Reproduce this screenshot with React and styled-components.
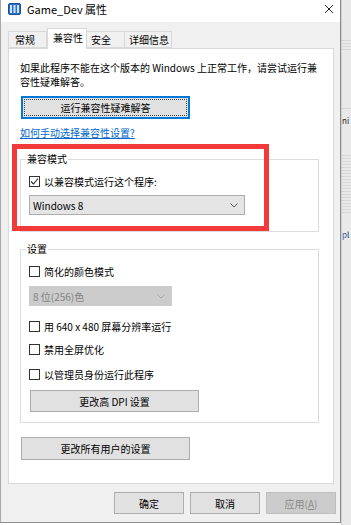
import React, { useState } from "react";
import styled, { createGlobalStyle } from "styled-components";

const GlobalStyle = createGlobalStyle`
  html, body {
    margin: 0;
    padding: 0;
    background: #ffffff;
  }
  body {
    font-family: "Noto Sans CJK SC", "Noto Sans", "Liberation Sans", sans-serif;
    font-size: 10px;
    color: #000;
  }
`;

const Screen = styled.div`
  display: flex;
  width: 351px;
  height: 525px;
  overflow: hidden;
`;

const Window = styled.div`
  width: 341px;
  height: 523px;
  box-sizing: border-box;
  border-left: 1px solid #a8a8a8;
  border-right: 1px solid #8c8c8c;
  border-bottom: 1px solid #8c8c8c;
  background: #f0f0f0;
  display: flex;
  flex-direction: column;
  flex-shrink: 0;
`;

const TitleBar = styled.div`
  height: 22px;
  box-sizing: border-box;
  padding: 0 0 4px 7px;
  background: #ffffff;
  display: flex;
  align-items: center;
  gap: 6px;
  font-size: 11px;
`;

const TitleText = styled.span`
  flex: 1;
  line-height: 14px;
`;

const CloseBtn = styled.div`
  width: 8px;
  height: 8px;
  margin-right: 7px;
  display: flex;
`;

const Body = styled.div`
  flex: 1;
  padding: 6px 7px 0 7px;
  display: flex;
  flex-direction: column;
`;

const TabRow = styled.div`
  display: flex;
  align-items: flex-end;
  height: 20px;
  position: relative;
  z-index: 1;
`;

const Tab = styled.div`
  box-sizing: border-box;
  width: ${(p) => p.$w}px;
  height: ${(p) => (p.$active ? 21 : 17)}px;
  padding-left: ${(p) => p.$pad}px;
  border: 1px solid #d9d9d9;
  border-bottom: ${(p) => (p.$active ? "none" : "1px solid #d9d9d9")};
  border-left-width: ${(p) => (p.$first || p.$active ? 1 : 0)}px;
  background: ${(p) => (p.$active ? "#ffffff" : "#f0f0f0")};
  line-height: ${(p) => (p.$active ? 18 : 15)}px;
  margin-bottom: ${(p) => (p.$active ? -1 : 0)}px;
  white-space: nowrap;
  cursor: default;
`;

const Panel = styled.div`
  position: relative;
  box-sizing: border-box;
  width: 326px;
  height: 436px;
  background: #ffffff;
  border: 1px solid #d9d9d9;
  padding: 12px 0 0 11px;
  display: flex;
  flex-direction: column;
  align-items: flex-start;
`;

const Intro = styled.p`
  margin: 0;
  width: 306px;
  line-height: 14px;
`;

const Button = styled.button`
  box-sizing: border-box;
  width: ${(p) => p.$w || 169}px;
  height: ${(p) => p.$h || 22}px;
  margin: ${(p) => p.$m || 0};
  padding: 0;
  font: inherit;
  font-size: 10px;
  color: ${(p) => (p.disabled ? "#8a8a8a" : "#000")};
  background: ${(p) => (p.disabled ? "#cccccc" : "#e1e1e1")};
  border: 1px solid ${(p) => (p.disabled ? "#bfbfbf" : "#adadad")};
  position: relative;
  ${(p) =>
    p.$focus &&
    `
    border: 2px solid #0078d7;
    &::after {
      content: "";
      position: absolute;
      inset: 1px;
      border: 1px dotted #444;
    }
  `}
`;

const Link = styled.a`
  margin-top: 7px;
  color: #0066cc;
  text-decoration: underline;
  line-height: 14px;
  cursor: pointer;
`;

const Group = styled.fieldset`
  box-sizing: border-box;
  width: 299px;
  margin: ${(p) => p.$mt}px 0 0 0;
  padding: 0 8px ${(p) => p.$pb}px 8px;
  border: 1px solid #dcdcdc;
  display: flex;
  flex-direction: column;
  align-items: flex-start;
  min-width: 0;
`;

const Legend = styled.legend`
  padding: 0 1px;
  margin-left: -3px;
  line-height: 14px;
`;

const CheckRow = styled.label`
  display: flex;
  align-items: center;
  gap: 4px;
  height: 14px;
  margin-top: ${(p) => p.$mt}px;
  cursor: default;
`;

const Box = styled.span`
  box-sizing: border-box;
  width: 11px;
  height: 11px;
  border: 1px solid #333333;
  background: #ffffff;
  display: flex;
  align-items: center;
  justify-content: center;
`;

const Select = styled.div`
  box-sizing: border-box;
  width: ${(p) => p.$w}px;
  height: 20px;
  margin-top: ${(p) => p.$mt}px;
  padding: 0 6px 0 3px;
  border: 1px solid ${(p) => (p.$disabled ? "#cccccc" : "#adadad")};
  background: ${(p) => (p.$disabled ? "#cccccc" : "#e5e5e5")};
  color: ${(p) => (p.$disabled ? "#838383" : "#000")};
  display: flex;
  align-items: center;
  justify-content: space-between;
`;

const RedFrame = styled.div`
  position: absolute;
  left: 3px;
  top: 95px;
  width: 257px;
  height: 87px;
  box-sizing: border-box;
  border: 5px solid #f23a3a;
  pointer-events: none;
`;

const Footer = styled.div`
  display: flex;
  justify-content: flex-end;
  gap: 6px;
  margin: 8px -3px 0 0;
`;

const Backdrop = styled.div`
  flex: 1;
  height: 525px;
  background: #e9e9e9;
  border-left: 1px solid #d0d0d0;
  display: flex;
  flex-direction: column;
  font-size: 8px;
  overflow: hidden;
`;

const Lines = styled.div`
  height: ${(p) => p.$h}px;
  margin-top: ${(p) => p.$mt}px;
  background: repeating-linear-gradient(
    to bottom,
    #d6d6d6 0,
    #d6d6d6 1px,
    #e9e9e9 1px,
    #e9e9e9 3px
  );
`;

const Fragment = styled.span`
  margin-top: ${(p) => p.$mt}px;
  line-height: 12px;
  color: #222;
  white-space: nowrap;
`;

const Chevron = ({ color = "#555" }) => (
  <svg width="8" height="5" viewBox="0 0 8 5">
    <path d="M0.5 0.5 L4 4 L7.5 0.5" fill="none" stroke={color} strokeWidth="1" />
  </svg>
);

const Check = ({ on, label, mt }) => (
  <CheckRow $mt={mt}>
    <Box>
      {on && (
        <svg width="9" height="9" viewBox="0 0 9 9">
          <path d="M1 4.5 L3.5 7 L8 1.5" fill="none" stroke="#222" strokeWidth="1.1" />
        </svg>
      )}
    </Box>
    <span>{label}</span>
  </CheckRow>
);

const AppIcon = () => (
  <svg width="13" height="12" viewBox="0 0 13 12">
    <rect x="0.5" y="0.5" width="12" height="11" rx="1.5" fill="#2a6fc9" stroke="#1b4f99" />
    <rect x="2" y="2" width="2" height="8" fill="#cfe2fb" />
    <rect x="5.5" y="2" width="2" height="8" fill="#cfe2fb" />
    <rect x="9" y="2" width="2" height="8" fill="#cfe2fb" />
  </svg>
);

const tabs = [
  { name: "常规", w: 39, pad: 6 },
  { name: "兼容性", w: 40, pad: 5 },
  { name: "安全", w: 38, pad: 4 },
  { name: "详细信息", w: 47, pad: 4 },
];

export default function App() {
  const [active, setActive] = useState(1);

  return (
    <>
      <GlobalStyle />
      <Screen>
        <Window>
          <TitleBar>
            <AppIcon />
            <TitleText>Game_Dev 属性</TitleText>
            <CloseBtn>
              <svg width="8" height="8" viewBox="0 0 8 8">
                <path d="M0 0 L8 8 M8 0 L0 8" stroke="#222" strokeWidth="1" />
              </svg>
            </CloseBtn>
          </TitleBar>
          <Body>
            <TabRow>
              {tabs.map((t, i) => (
                <Tab
                  key={t.name}
                  $w={t.w}
                  $pad={t.pad}
                  $first={i === 0}
                  $active={i === active}
                  onClick={() => setActive(i)}
                >
                  {t.name}
                </Tab>
              ))}
            </TabRow>
            <Panel>
              <Intro>如果此程序不能在这个版本的 Windows 上正常工作，请尝试运行兼容性疑难解答。</Intro>
              <Button $focus $w={169} $h={23} $m="7px 0 0 1px">运行兼容性疑难解答</Button>
              <Link>如何手动选择兼容性设置?</Link>

              <Group $mt={12} $pb={16}>
                <Legend>兼容模式</Legend>
                <Check on label="以兼容模式运行这个程序:" mt={8} />
                <Select $w={216} $mt={7}>
                  <span>Windows 8</span>
                  <Chevron />
                </Select>
              </Group>

              <Group $mt={10} $pb={10}>
                <Legend>设置</Legend>
                <Check label="简化的颜色模式" mt={8} />
                <Select $w={143} $mt={8} $disabled>
                  <span>8 位(256)色</span>
                  <Chevron color="#a8a8a8" />
                </Select>
                <Check label="用 640 x 480 屏幕分辨率运行" mt={13} />
                <Check label="禁用全屏优化" mt={9} />
                <Check label="以管理员身份运行此程序" mt={11} />
                <Button $m="9px 0 0 1px">更改高 DPI 设置</Button>
              </Group>

              <Button $h={23} $m="14px 0 0 1px">更改所有用户的设置</Button>

              <RedFrame />
            </Panel>
            <Footer>
              <Button $w={70}>确定</Button>
              <Button $w={70}>取消</Button>
              <Button $w={70} disabled>应用(<u>A</u>)</Button>
            </Footer>
          </Body>
        </Window>
        <Backdrop>
          <Lines $mt={40} $h={10} />
          <Lines $mt={58} $h={1} />
          <Fragment $mt={6}>ni</Fragment>
          <Lines $mt={28} $h={58} />
          <Fragment $mt={16}>
            <span style={{ color: "#2a5db0" }}>p</span>l
          </Fragment>
        </Backdrop>
      </Screen>
    </>
  );
}
